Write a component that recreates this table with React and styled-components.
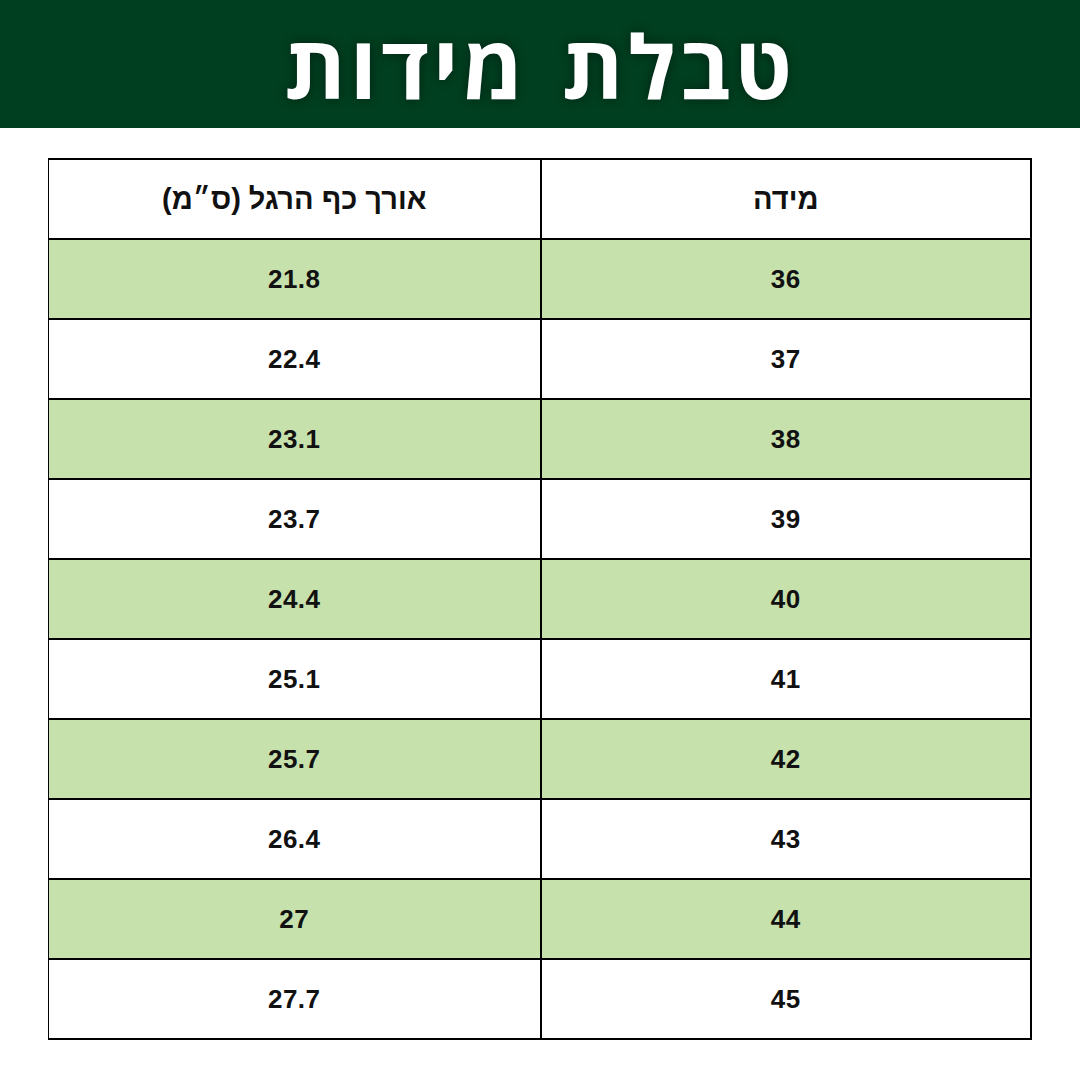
import React from "react";
import styled, { createGlobalStyle } from "styled-components";

const GlobalStyle = createGlobalStyle`
  html, body {
    margin: 0;
    padding: 0;
    background: #ffffff;
  }
`;

const Page = styled.div`
  width: 1080px;
  height: 1080px;
  background: #ffffff;
  direction: rtl;
  display: flex;
  flex-direction: column;
`;

const Banner = styled.header`
  height: 128px;
  background: #003f20;
  display: flex;
  align-items: center;
  justify-content: center;
`;

const Title = styled.h1`
  margin: 0;
  color: #ffffff;
  font-family: "Open Sans", "DejaVu Sans", sans-serif;
  font-weight: 700;
  font-size: 88px;
  letter-spacing: 4px;
  word-spacing: 8px;
  line-height: 1;
  padding-top: 2px;
  text-shadow: 0 0 12px rgba(0, 0, 0, 0.45);
`;

const Table = styled.div`
  margin: 30px 48px 0 48px;
  display: grid;
  grid-template-columns: 1fr 1fr;
  border: 2px solid #000000;
  border-bottom-width: 1px;
  border-left-width: 1px;
`;

const Cell = styled.div`
  height: 80px;
  box-sizing: border-box;
  display: flex;
  align-items: center;
  justify-content: center;
  background: ${(props) => (props.shaded ? "#c7e1ad" : "#ffffff")};
  border-bottom: 2px solid #000000;
  border-left: ${(props) => (props.first ? "2px solid #000000" : "none")};
  font-family: "Liberation Sans", Arial, sans-serif;
  font-weight: 700;
  font-size: ${(props) => (props.head ? "29px" : "26px")};
  letter-spacing: ${(props) => (props.head ? "0" : "0.5px")};
  color: #111111;
  &:nth-last-child(-n + 2) {
    border-bottom: 1px solid #000000;
    height: 79px;
  }
`;

const rows = [
  ["36", "21.8"],
  ["37", "22.4"],
  ["38", "23.1"],
  ["39", "23.7"],
  ["40", "24.4"],
  ["41", "25.1"],
  ["42", "25.7"],
  ["43", "26.4"],
  ["44", "27"],
  ["45", "27.7"],
];

export default function App() {
  return (
    <>
      <GlobalStyle />
      <Page>
        <Banner>
          <Title>טבלת מידות</Title>
        </Banner>
        <Table>
          <Cell head first>
            מידה
          </Cell>
          <Cell head>אורך כף הרגל (ס״מ)</Cell>
          {rows.map((r, i) => (
            <React.Fragment key={i}>
              <Cell first shaded={i % 2 === 0}>
                {r[0]}
              </Cell>
              <Cell shaded={i % 2 === 0}>{r[1]}</Cell>
            </React.Fragment>
          ))}
        </Table>
      </Page>
    </>
  );
}
